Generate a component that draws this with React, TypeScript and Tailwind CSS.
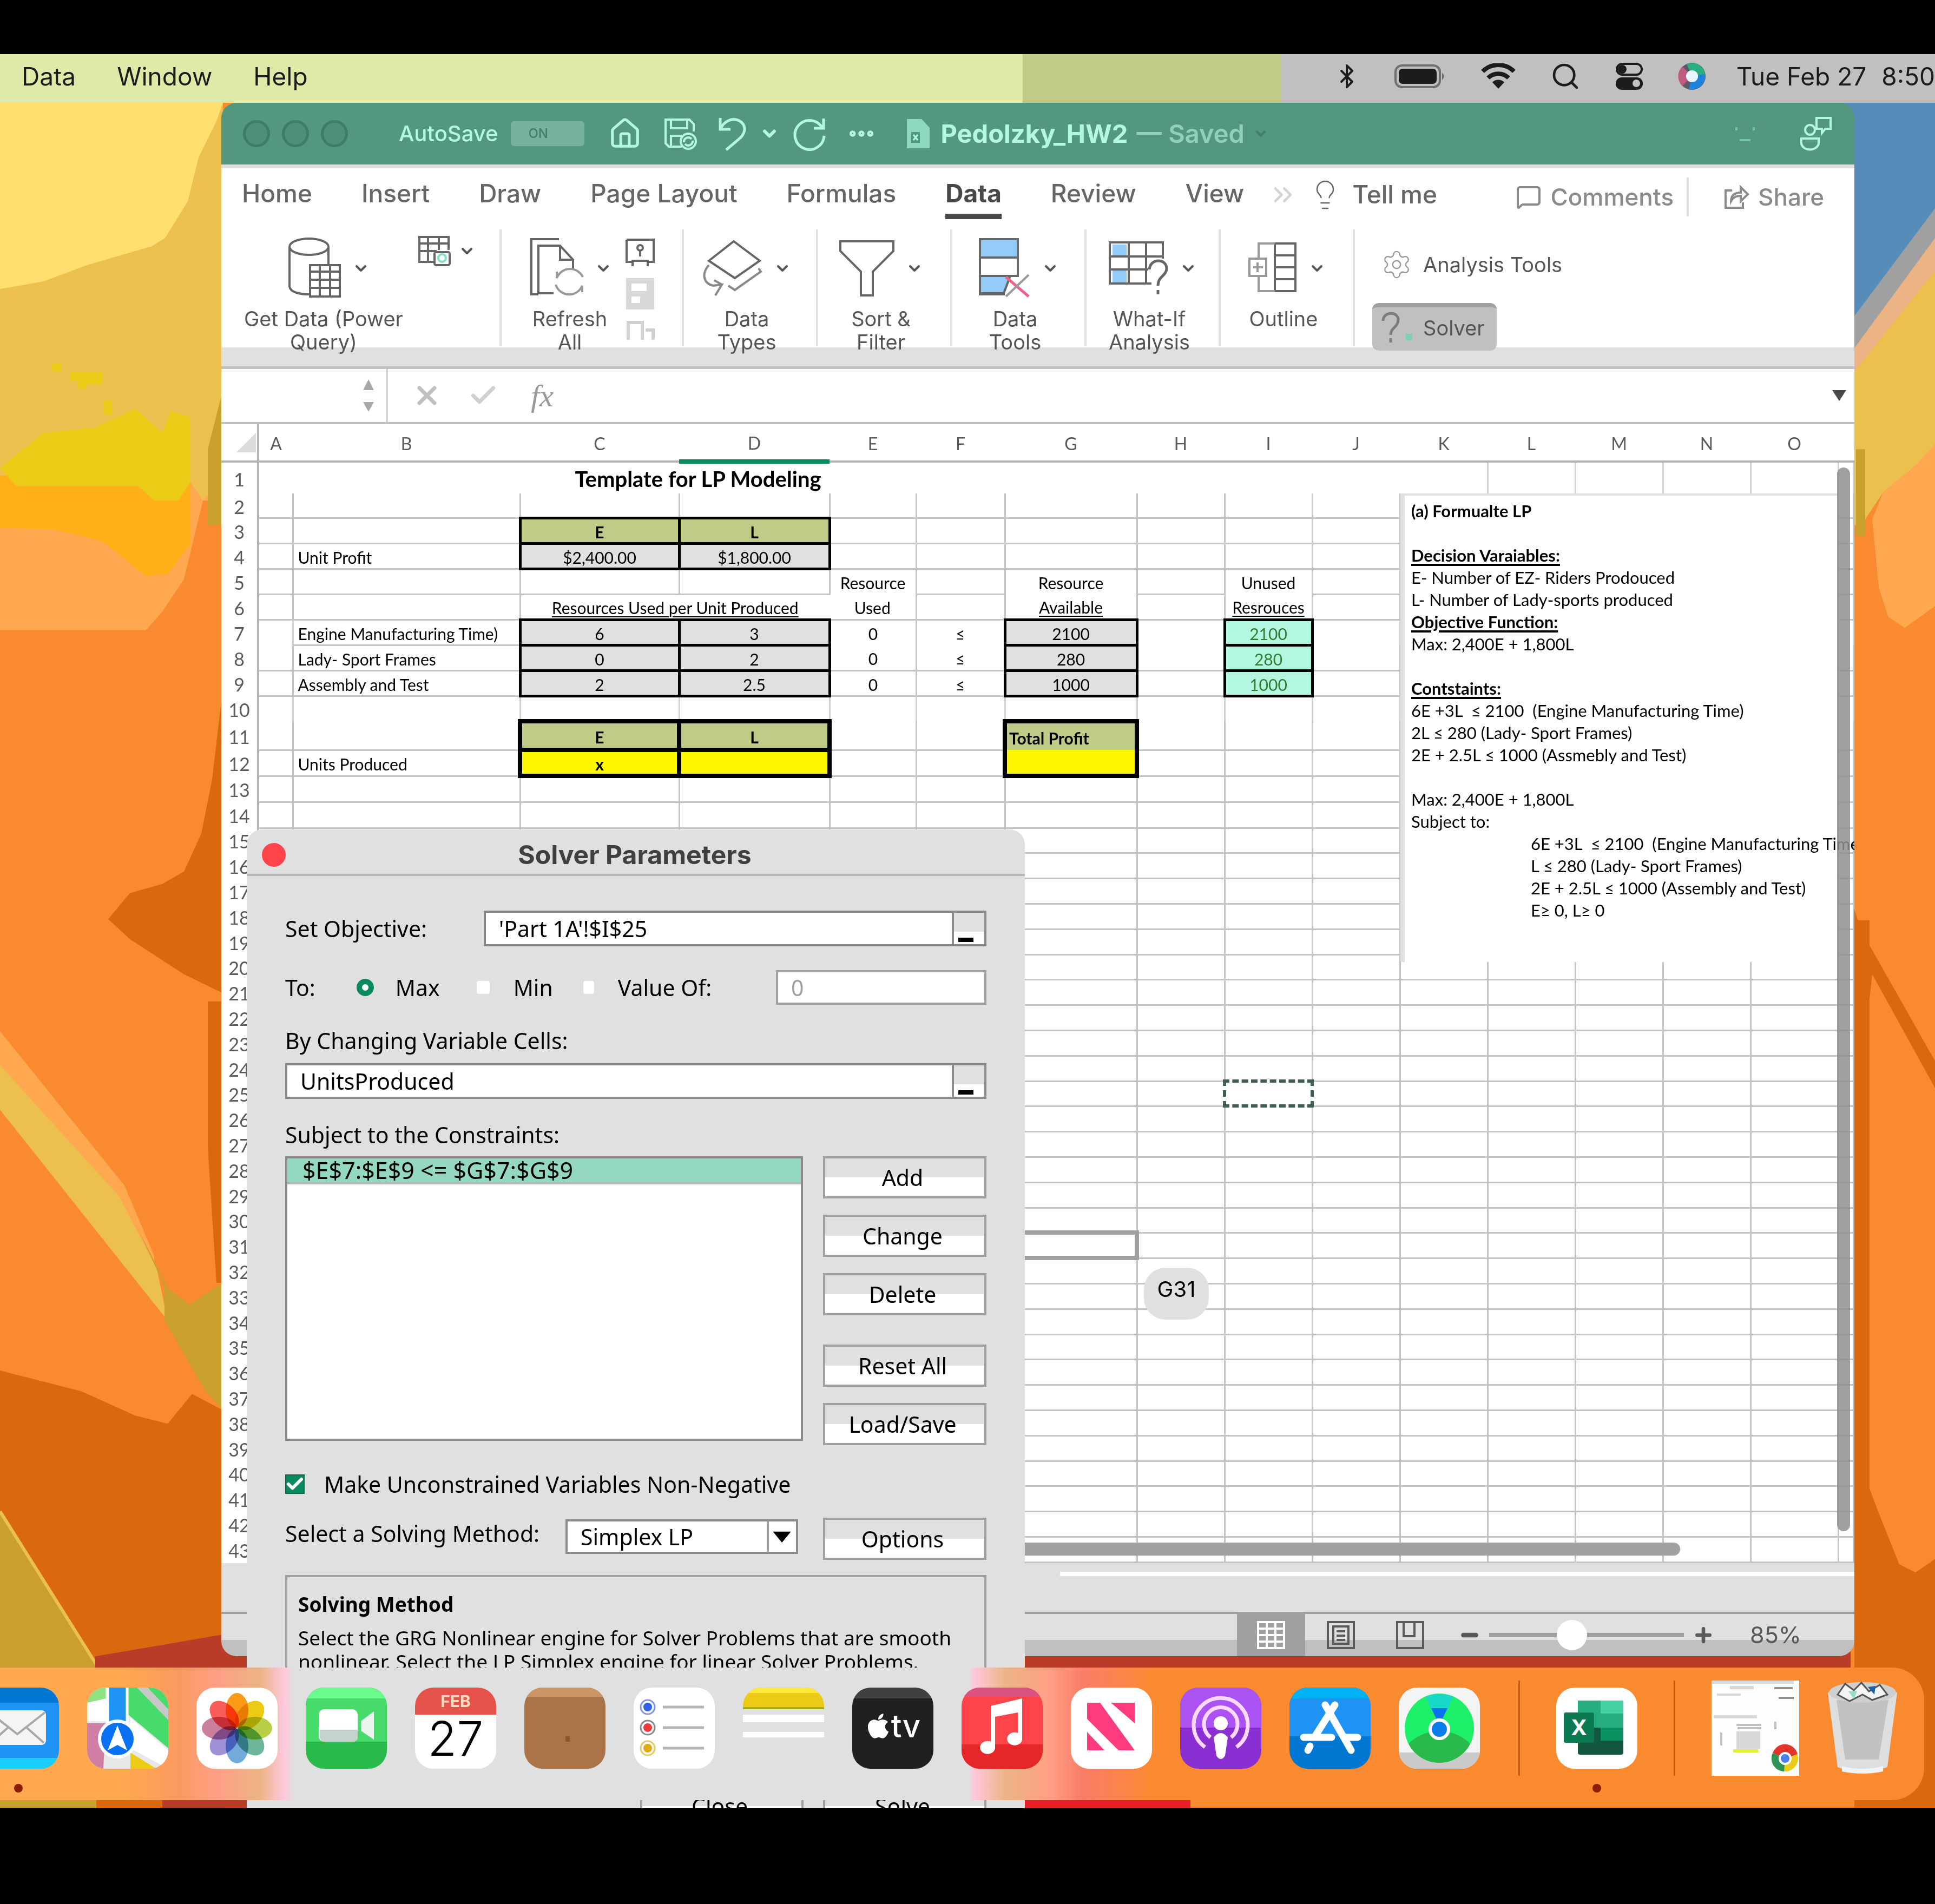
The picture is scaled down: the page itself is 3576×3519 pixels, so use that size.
import { useState } from 'react';
import type { ReactNode } from 'react';
import {
  Bluetooth,
  Check,
  ChevronDown,
  ChevronsRight,
  Ellipsis,
  House,
  Lightbulb,
  MessageSquare,
  Minus,
  Plus,
  Search,
  Settings,
  X,
} from 'lucide-react';
import { FaApple } from 'react-icons/fa';

interface Cell {
  text?: string;
  className: string;
}

const columns = ['A', 'B', 'C', 'D', 'E', 'F', 'G', 'H', 'I', 'J', 'K', 'L', 'M', 'N', 'O'];

const HEAD = 'border-[5px] border-black bg-[#c1cb88] font-bold text-center';
const INPUT = 'border-[5px] border-black bg-[#e0e0e0] text-center';
const BOXHEAD = 'border-8 border-black bg-[#c1cb88] font-bold text-center';
const BOXINPUT = 'border-8 border-black bg-[#fff700] text-center font-bold';
const LEFT = 'border-r-[3px] border-b-[3px] border-[#c4c4c4] text-left pl-2';
const CENTER = 'border-r-[3px] border-b-[3px] border-[#c4c4c4] text-center';
const OPEN = 'border-r-[3px] border-[#c4c4c4] text-center';
const UNDERLINED = 'border-r-[3px] border-[#c4c4c4] text-center underline decoration-2 underline-offset-4';
const MINT = 'border-[5px] border-black bg-[#b4f7e1] text-center text-[#2e7d32]';

const cells: Record<string, Cell> = {
  C3: { text: 'E', className: HEAD },
  D3: { text: 'L', className: HEAD },
  B4: { text: 'Unit Profit', className: LEFT },
  C4: { text: '$2,400.00', className: INPUT },
  D4: { text: '$1,800.00', className: INPUT },
  E5: { text: 'Resource', className: OPEN },
  G5: { text: 'Resource', className: OPEN },
  I5: { text: 'Unused', className: OPEN },
  E6: { text: 'Used', className: CENTER },
  G6: { text: 'Available', className: UNDERLINED },
  I6: { text: 'Resrouces', className: UNDERLINED },
  B7: { text: 'Engine Manufacturing Time)', className: LEFT },
  C7: { text: '6', className: INPUT },
  D7: { text: '3', className: INPUT },
  E7: { text: '0', className: OPEN },
  F7: { text: '≤', className: OPEN },
  G7: { text: '2100', className: INPUT },
  I7: { text: '2100', className: MINT },
  B8: { text: 'Lady- Sport Frames', className: LEFT },
  C8: { text: '0', className: INPUT },
  D8: { text: '2', className: INPUT },
  E8: { text: '0', className: CENTER },
  F8: { text: '≤', className: CENTER },
  G8: { text: '280', className: INPUT },
  I8: { text: '280', className: MINT },
  B9: { text: 'Assembly and Test', className: LEFT },
  C9: { text: '2', className: INPUT },
  D9: { text: '2.5', className: INPUT },
  E9: { text: '0', className: CENTER },
  F9: { text: '≤', className: CENTER },
  G9: { text: '1000', className: INPUT },
  I9: { text: '1000', className: MINT },
  C11: { text: 'E', className: BOXHEAD },
  D11: { text: 'L', className: BOXHEAD },
  G11: { text: 'Total Profit', className: 'border-x-8 border-t-8 border-black bg-[#c1cb88] font-bold text-left pl-1' },
  B12: { text: 'Units Produced', className: LEFT },
  C12: { text: 'x', className: BOXINPUT },
  D12: { className: BOXINPUT },
  G12: { className: 'border-x-8 border-b-8 border-black bg-[#fff700]' },
  I25: { className: 'border-[6px] border-dashed border-[#3f5f55]' },
  G31: { className: 'border-8 border-[#a0a0a0]' },
};

const rowHeight = (row: number) => {
  if (row === 1) return 'h-[59px]';
  if (row === 2) return 'h-[45px]';
  if (row === 11) return 'h-[53px]';
  if (row > 11 && row < 15) return 'h-12';
  return row > 14 && row % 5 === 0 ? 'h-[46px]' : 'h-[47px]';
};

const heading = 'font-bold underline decoration-4 underline-offset-4';

const notes = [
  { text: '(a) Formualte LP', className: 'font-bold' },
  { text: ' ', className: '' },
  { text: 'Decision Varaiables:', className: heading },
  { text: 'E- Number of EZ- Riders Prodouced', className: '' },
  { text: 'L- Number of Lady-sports produced', className: '' },
  { text: 'Objective Function:', className: heading },
  { text: 'Max: 2,400E + 1,800L', className: '' },
  { text: ' ', className: '' },
  { text: 'Contstaints:', className: heading },
  { text: '6E +3L  ≤ 2100  (Engine Manufacturing Time)', className: '' },
  { text: '2L ≤ 280 (Lady- Sport Frames)', className: '' },
  { text: '2E + 2.5L ≤ 1000 (Assmebly and Test)', className: '' },
  { text: ' ', className: '' },
  { text: 'Max: 2,400E + 1,800L', className: '' },
  { text: 'Subject to:', className: '' },
  { text: '6E +3L  ≤ 2100  (Engine Manufacturing Time', className: 'pl-[221px]' },
  { text: 'L ≤ 280 (Lady- Sport Frames)', className: 'pl-[221px]' },
  { text: '2E + 2.5L ≤ 1000 (Assembly and Test)', className: 'pl-[221px]' },
  { text: 'E≥ 0, L≥ 0', className: 'pl-[221px]' },
];

function MenuBar() {
  return (
    <header className="flex h-[90px] items-center justify-between bg-[linear-gradient(90deg,#e0eaa8_0,#e0eaa8_1890px,#c1cb88_1890px,#c1cb88_2367px,#c0c0c0_2367px)] pb-2 text-[46px] text-[#1c1c1c]">
      <nav className="flex gap-[76px] pl-10">
        <a href="#data">Data</a>
        <a href="#window">Window</a>
        <a href="#help">Help</a>
      </nav>
      <div className="flex items-center whitespace-nowrap">
        <Bluetooth className="mr-16 h-14 w-12" strokeWidth={2} />
        <svg className="mr-16 h-11 w-24" viewBox="0 0 96 44">
          <rect x="2" y="2" width="82" height="40" rx="12" fill="none" stroke="#6f6f6f" strokeWidth="4" />
          <rect x="8" y="8" width="70" height="28" rx="7" fill="#1c1c1c" />
          <path d="M88 15 q7 7 0 14z" fill="#6f6f6f" />
        </svg>
        <svg className="mr-16 h-12 w-16" viewBox="0 0 64 48">
          <path d="M3 15 A41 41 0 0 1 61 15" fill="none" stroke="#1c1c1c" strokeWidth="8" />
          <path d="M13 27 A27 27 0 0 1 51 27" fill="none" stroke="#1c1c1c" strokeWidth="8" />
          <path d="M21 35 A16 16 0 0 1 43 35 L32 47z" fill="#1c1c1c" />
        </svg>
        <Search className="mr-16 h-14 w-14" strokeWidth={2} />
        <svg className="mr-16 h-13 w-13" viewBox="0 0 52 52">
          <rect x="3" y="3" width="46" height="20" rx="10" fill="none" stroke="#1c1c1c" strokeWidth="4" />
          <circle cx="13" cy="13" r="8" fill="#1c1c1c" />
          <rect x="1" y="28" width="50" height="23" rx="11" fill="#1c1c1c" />
          <circle cx="39" cy="39" r="7" fill="#c0c0c0" />
        </svg>
        <svg className="mr-14 h-13 w-13" viewBox="0 0 52 52">
          <circle cx="26" cy="26" r="25" fill="#5a5a68" />
          <path d="M26 26 L8 8 A25 25 0 0 0 8 44z" fill="#c05a80" />
          <path d="M26 26 L16 3 A25 25 0 0 1 50 22z" fill="#29b07f" />
          <path d="M26 26 L50 22 A25 25 0 0 1 20 50z" fill="#1f83dd" />
          <circle cx="26" cy="26" r="11" fill="#e8f4ff" />
        </svg>
        <time className="mr-7">Tue Feb 27</time>
        <time>8:50</time>
      </div>
    </header>
  );
}

function Wallpaper() {
  return (
    <svg className="absolute inset-0 h-full w-full" viewBox="0 190 3576 3150" preserveAspectRatio="none" aria-hidden="true">
      <rect y="190" width="3576" height="3150" fill="#fa8a30" />
      <path d="M0 190H412V925L375 925 340 1070 300 1130 270 1164H0z" fill="#ffa84f" />
      <path d="M0 190H412V880L375 925 352 890 0 878z" fill="#ecc04e" />
      <path d="M0 190H412L400 224 367 291 347 372 305 440 280 455 160 490 80 520 0 534z" fill="#ffdf6f" />
      <path d="M0 880H352V1005L310 1060 270 1065 190 1000 100 978 0 975z" fill="#ffb017" />
      <path d="M0 865L80 800 175 790 250 755 300 800 315 760 352 770V890L330 925H285L255 898H30z" fill="#eccb17" />
      <path d="M95 672h18v14H95zM130 688h60v22h-30v8h-16v-14h-14zM192 740h16v26h-16z" fill="#eccb17" />
      <path d="M384 830L412 720V970H384z" fill="#c9a02d" />
      <path d="M200 1698L240 1650 300 1633 340 1610 372 1540 392 1440 412 1270V1835L340 1800 240 1735z" fill="#d9680f" />
      <path d="M384 1850H412V2370H400L384 2120z" fill="#d9680f" />
      <path d="M0 1905L230 2190 285 2320V2370L0 1980z" fill="#ffa84f" />
      <path d="M0 1968L220 2210 290 2345 310 2440 0 2050z" fill="#ecc04e" />
      <path d="M250 2260L310 2380 350 2410 412 2370V2605L380 2570 304 2440V2376z" fill="#c9a02d" />
      <path d="M0 2532L150 2570 250 2615 310 2630 355 2575 412 2605V3340H0z" fill="#d9680f" />
      <path d="M0 2792L178 3075V3340H0z" fill="#c9a02d" />
      <path d="M0 2792L178 3075" stroke="#ecc04e" strokeWidth="6" />
      <path d="M176 3060L410 3020 456 3050V3340H300V3100H176z" fill="#b83c28" />

      <path d="M3400 190H3576V390L3400 640z" fill="#558cba" />
      <path d="M3576 385V450L3400 700V620z" fill="#a0a0a0" />
      <path d="M3576 440V510L3400 780V680z" fill="#ecb384" />
      <path d="M3576 500V830L3480 910 3440 970H3400V720z" fill="#ecc04e" />
      <path d="M3430 830H3447V990H3430z" fill="#c9a02d" />
      <path d="M3576 820L3540 860 3480 910 3460 960 3472 1085 3490 1140 3520 1160 3576 1120z" fill="#ffa84f" />
      <path d="M3427 1680L3440 1720 3576 1960V2010L3460 1800 3427 2100z" fill="#d9680f" />
      <path d="M3427 1700H3455V2750L3470 2790 3510 2890 3540 2905 3576 2880V3340H3427z" fill="#d9680f" />
      <path d="M1880 3050H3420V3100H1880z" fill="#b83c28" />
      <path d="M880 3320H2200V3340H880z" fill="#e62028" />
    </svg>
  );
}

function TitleBar() {
  return (
    <div className="flex h-[114px] items-center bg-[#54977f] px-10 text-[40px] font-medium text-[#b4f7e1]">
      <div className="flex gap-[22px]">
        {['Close', 'Minimize', 'Zoom'].map(name => (
          <button key={name} aria-label={name} className="h-[50px] w-[50px] rounded-full border-[5px] border-[#3b7d68] bg-[#4d8f78]" />
        ))}
      </div>
      <span className="ml-[94px]">AutoSave</span>
      <button aria-label="AutoSave switch" className="ml-6 flex h-[46px] w-[136px] items-center rounded-md bg-[#76b39f] pl-8 text-2xl text-[#3f806c]">
        ON
      </button>
      <div className="ml-11 flex items-center">
        <House className="h-[62px] w-[62px]" strokeWidth={2} />
        <svg className="ml-10 h-[64px] w-[64px]" viewBox="0 0 64 64" fill="none" stroke="#b4f7e1" strokeWidth="4">
          <path d="M34 56H10L4 50V6H48L56 14V28" />
          <path d="M14 6V22H44V6M14 56V36H34" />
          <circle cx="46" cy="46" r="14" />
          <path d="M38 48a8 8 0 0 1 14-6M54 45a8 8 0 0 1-14 6" />
        </svg>
        <svg className="ml-9 h-[64px] w-[54px]" viewBox="0 0 54 64" fill="none" stroke="#b4f7e1" strokeWidth="5">
          <path d="M5 3V24H24M5 24C12 8 28 2 40 8c14 8 12 22 2 32L16 62" />
        </svg>
        <ChevronDown className="ml-6 h-9 w-9" strokeWidth={4} />
        <svg className="ml-6 h-[64px] w-[64px]" viewBox="0 0 64 64" fill="none" stroke="#b4f7e1" strokeWidth="5">
          <path d="M58 4V22H40M56 22A27 27 0 1 0 59 36" />
        </svg>
        <Ellipsis className="ml-9 h-14 w-14" strokeWidth={3} />
      </div>
      <div className="ml-14 flex items-center whitespace-nowrap text-[47px]">
        <svg className="mr-5 h-[54px] w-[42px]" viewBox="0 0 42 54">
          <path d="M0 0H27L42 16V54H0z" fill="#8fd8c0" />
          <path d="M8 24H24V44H8z" fill="#54977f" />
          <path d="M12 29l8 10M20 29l-8 10" stroke="#b4f7e1" strokeWidth="3" />
        </svg>
        <h1 className="font-bold">Pedolzky_HW2</h1>
        <span className="ml-4 font-semibold text-[#8fd0bc]">— Saved</span>
        <ChevronDown className="ml-4 h-7 w-7 text-[#3f806c]" strokeWidth={4} />
      </div>
      <div className="ml-auto flex items-center gap-20">
        <svg className="h-10 w-10" viewBox="0 0 40 40" fill="none" stroke="#76c4a8" strokeWidth="4">
          <path d="M4 8V14M36 8V14M10 32H30" />
        </svg>
        <svg className="h-[66px] w-[62px]" viewBox="0 0 62 66" fill="none" stroke="#b4f7e1" strokeWidth="4">
          <path d="M32 4H58V24H48L42 32V24H32z" />
          <circle cx="20" cy="26" r="9" />
          <path d="M4 42H36V52C32 66 8 66 4 52z" />
        </svg>
      </div>
    </div>
  );
}

function RibbonTabs() {
  const tabs = ['Home', 'Insert', 'Draw', 'Page Layout', 'Formulas', 'Data', 'Review', 'View'];
  const [active, setActive] = useState('Data');

  return (
    <div className="flex h-[105px] items-center bg-white pr-14 pb-2 pl-[38px] text-[46px] text-[#666] font-medium">
      <div className="flex gap-[91px] whitespace-nowrap">
        {tabs.map(tab => (
          <button
            key={tab}
            onClick={() => setActive(tab)}
            className={`border-b-[10px] pt-1 leading-[76px] ${
              tab === active ? 'border-[#484848] font-bold text-[#484848]' : 'border-transparent'
            }`}
          >
            {tab}
          </button>
        ))}
      </div>
      <ChevronsRight className="ml-11 h-14 w-14 text-[#d4d4d4]" strokeWidth={2} />
      <Lightbulb className="ml-5 h-15 w-15" strokeWidth={1} />
      <span className="ml-5 whitespace-nowrap">Tell me</span>
      <div className="ml-auto flex items-center pt-2 text-[44px] text-[#8a8a8a]">
        <button className="flex items-center gap-4">
          <MessageSquare className="h-12 w-12" strokeWidth={2} />
          Comments
        </button>
        <div className="mx-6 h-[72px] w-1 bg-[#e0e0e0]" />
        <button className="ml-10 flex items-center gap-4">
          <svg className="h-12 w-12" viewBox="0 0 48 48" fill="none" stroke="#8a8a8a" strokeWidth="4">
            <path d="M16 12H4V44H36V34M14 32C14 20 22 16 32 16V6L45 19 32 32V22C22 22 18 25 14 32z" />
          </svg>
          Share
        </button>
      </div>
    </div>
  );
}

function Tool({ icon, lines }: { icon: ReactNode; lines: string[] }) {
  return (
    <button className="flex flex-col items-center">
      <span className="flex h-[144px] items-center">
        {icon}
        <ChevronDown className="ml-5 h-8 w-8" strokeWidth={3} />
      </span>
      {lines.map(line => (
        <span key={line} className="whitespace-nowrap">{line}</span>
      ))}
    </button>
  );
}

function Divider() {
  return <div className="h-[216px] w-1 shrink-0 bg-[#e0e0e0]" />;
}

function Ribbon() {
  const stroke = { fill: 'none', stroke: '#666', strokeWidth: 4 };

  return (
    <div className="h-[266px] border-b-[5px] border-[#c0c0c0] bg-[linear-gradient(#fff_0,#fff_226px,#e0e0e0_226px)] pt-2 text-[38px] leading-[43px] text-[#555]">
      <div className="flex items-start">
        <div className="flex h-[232px] w-[514px] pl-[42px]">
          <Tool
            lines={['Get Data (Power', 'Query)']}
            icon={
              <svg className="ml-5 h-[116px] w-[98px]" viewBox="0 0 98 116" {...stroke}>
                <ellipse cx="38" cy="18" rx="36" ry="15" />
                <path d="M2 18V92C4 102 20 106 38 106M74 18V50" />
                <path d="M40 52H95V110H40zM40 64H95M40 79H95M40 94H95M58 52V110M77 52V110" fill="#fff" />
              </svg>
            }
          />
          <button aria-label="Data from picture" className="mt-2 ml-7 flex h-16 items-center gap-3">
            <svg className="h-[60px] w-[62px]" viewBox="0 0 62 60" {...stroke}>
              <path d="M28 50H2V4H56V28M2 16H56M2 30H34M18 4V50M38 4V28" />
              <rect x="30" y="32" width="28" height="24" rx="3" />
              <circle cx="44" cy="43" r="7" stroke="#7fe0cc" />
            </svg>
            <ChevronDown className="h-8 w-8" strokeWidth={3} />
          </button>
        </div>
        <Divider />
        <div className="flex w-[333px] gap-6 pl-12">
          <Tool
            lines={['Refresh', 'All']}
            icon={
              <svg className="ml-1 h-[116px] w-[100px]" viewBox="0 0 100 116" {...stroke}>
                <path d="M16 106H3V4H54M44 104H16V16H56L80 42V58M56 16V42H80" />
                <path d="M98 74A26 26 0 0 0 50 76V64M48 88A26 26 0 0 0 97 90V102" stroke="#999" />
              </svg>
            }
          />
          <div className="mt-4 flex flex-col gap-4 text-[#a0a0a0]">
            <svg className="h-14 w-14" viewBox="0 0 56 56" {...stroke}>
              <path d="M3 3H53V44H40M3 3V44H14M28 22V34M14 52V42H42V52" />
              <circle cx="28" cy="18" r="5" />
            </svg>
            <svg className="h-[62px] w-14" viewBox="0 0 56 62">
              <path d="M2 2H54V60H2z" fill="#d8d8d8" />
              <path d="M12 12H40V26H12zM12 36H28V48H12z" fill="#fff" />
            </svg>
            <svg className="h-10 w-14" viewBox="0 0 56 40" fill="none" stroke="#d0d0d0" strokeWidth="6">
              <path d="M6 38V6H32V38M38 20H52V38" />
            </svg>
          </div>
        </div>
        <Divider />
        <div className="flex w-[244px] justify-center pr-3">
          <Tool
            lines={['Data', 'Types']}
            icon={
              <svg className="h-[112px] w-[112px]" viewBox="0 0 112 112" {...stroke}>
                <path d="M58 6L106 42 60 74 12 42z" />
                <path d="M104 56L108 62 60 96 48 88M12 50C-2 66 2 84 20 88L36 86 24 106M36 86L22 78" stroke="#888" />
              </svg>
            }
          />
        </div>
        <Divider />
        <div className="flex w-[244px] justify-center pr-3">
          <Tool
            lines={['Sort &', 'Filter']}
            icon={
              <svg className="h-[108px] w-[104px]" viewBox="0 0 104 108" {...stroke}>
                <path d="M3 4H101V22L63 60V104H41V60L3 22z" />
              </svg>
            }
          />
        </div>
        <Divider />
        <div className="flex w-[244px] justify-center pr-3">
          <Tool
            lines={['Data', 'Tools']}
            icon={
              <svg className="ml-3 h-[116px] w-[98px]" viewBox="0 0 98 116" {...stroke}>
                <path d="M4 4H74V38H4zM4 72H60L48 104H4z" fill="#94cbf8" />
                <path d="M4 4H74V74M4 4V106H50M4 38H74M4 72H74" />
                <path d="M52 74L94 110" stroke="#f2608a" strokeWidth="5" />
                <path d="M94 70L52 110" stroke="#999" />
              </svg>
            }
          />
        </div>
        <Divider />
        <div className="flex w-[244px] justify-center pr-3">
          <Tool
            lines={['What-If', 'Analysis']}
            icon={
              <svg className="ml-3 h-[104px] w-[112px]" viewBox="0 0 112 104" {...stroke}>
                <path d="M8 8H34V30H8zM8 56H34V78H8z" fill="#94cbf8" stroke="none" />
                <path d="M80 80H3V4H101V34M3 30H101M3 54H74M38 4V80M70 4V80" />
                <path d="M76 54C78 32 108 34 108 52C108 66 92 66 92 84M92 92V100" strokeWidth="5" />
              </svg>
            }
          />
        </div>
        <Divider />
        <div className="flex w-[244px] justify-center pr-3">
          <Tool
            lines={['Outline']}
            icon={
              <svg className="ml-3 h-[100px] w-[92px]" viewBox="0 0 92 100" {...stroke}>
                <path d="M50 4H88V92H50zM50 26H88M50 48H88M50 70H88" />
                <path d="M50 4H20V32M20 64V92H50M3 32H34V64H3zM10 48H28M18 39V57" stroke="#999" />
              </svg>
            }
          />
        </div>
        <Divider />
        <div className="flex flex-col items-start gap-[42px] pt-9 pl-8">
          <button className="flex items-center gap-5 pl-4">
            <Settings className="h-[58px] w-[58px] text-[#999]" strokeWidth={1} />
            Analysis Tools
          </button>
          <button className="flex h-[88px] w-[230px] items-center rounded-xl border-t-8 border-[#a0a0a0] bg-[#c0c0c0] pb-1 pl-4">
            <svg className="h-[62px] w-[62px]" viewBox="0 0 62 62" fill="none" stroke="#7c7c7c" strokeWidth="5">
              <path d="M4 18C4 0 32 0 32 16C32 30 18 30 18 44M18 50V58" />
              <path d="M46 42H58V54H46z" fill="#7fd0bb" stroke="none" />
            </svg>
            <span className="ml-4">Solver</span>
          </button>
        </div>
      </div>
    </div>
  );
}

function FormulaBar() {
  return (
    <div className="flex h-[102px] items-center border-b-4 border-[#c0c0c0] bg-white">
      <input aria-label="Name box" className="h-full w-[256px] px-4 text-4xl outline-none" />
      <svg className="mr-4 h-16 w-8" viewBox="0 0 32 64" fill="#a8a8a8">
        <path d="M16 2L26 22H6zM6 44H26L16 62z" />
      </svg>
      <div className="h-full w-1 bg-[#d4d4d4]" />
      <X className="ml-11 h-14 w-14 text-[#c0c0c0]" strokeWidth={3} />
      <Check className="ml-12 h-14 w-14 text-[#d0d0d0]" strokeWidth={3} />
      <label htmlFor="formula" className="ml-15 font-['Liberation_Serif',serif] text-[58px] text-[#999] italic">
        fx
      </label>
      <input id="formula" className="h-full min-w-0 flex-1 px-6 text-4xl outline-none" />
      <svg className="mr-3 h-6 w-8" viewBox="0 0 32 24">
        <path d="M3 2H29L16 22z" fill="#4a4a4a" />
      </svg>
    </div>
  );
}

function SheetRow({ row }: { row: number }) {
  const openRow = row === 1 || row === 7 || row === 10;
  const blank = openRow ? 'border-r-[3px] border-[#d0d0d0]' : 'border-r-[3px] border-b-[3px] border-[#c4c4c4]';

  return (
    <tr className={rowHeight(row)}>
      <th scope="row" className="border-r-4 border-[#b4b4b4] pt-1 text-[34px] font-normal text-[#5a5a5a]">{row}</th>
      {columns.map(column => {
        if (row === 1 && column <= 'J') {
          if (column === 'A') {
            return (
              <td key={column} colSpan={7} className="text-center text-[40px] font-bold">
                Template for LP Modeling
              </td>
            );
          }
          return column === 'H' ? <td key={column} colSpan={3} className="border-r-[3px] border-white" /> : null;
        }
        if (row === 6 && column === 'C') {
          return (
            <td key={column} colSpan={2} className="pt-1 text-center underline decoration-2 underline-offset-4">
              Resources Used per Unit Produced
            </td>
          );
        }
        if (row === 6 && column === 'D') return null;
        const cell = cells[column + row];
        return (
          <td key={column} className={`pt-1 ${cell ? cell.className : blank}`}>
            {cell?.text}
          </td>
        );
      })}
      <td className={blank} />
    </tr>
  );
}

function Sheet() {
  const rows = Array.from({ length: 43 }, (_, i) => i + 1);

  return (
    <div className="relative bg-white font-[Lato,'Open_Sans',sans-serif] text-black">
      <table className="w-full table-fixed border-collapse text-[30px] leading-9 whitespace-nowrap">
        <colgroup>
          <col className="w-[68px]" />
          <col className="w-[64px]" />
          <col className="w-[420px]" />
          <col className="w-[294px]" />
          <col className="w-[278px]" />
          <col className="w-[160px]" />
          <col className="w-[164px]" />
          <col className="w-[244px]" />
          <col className="w-[162px]" />
          <col className="w-[162px]" />
          <col className="w-[162px]" />
          <col className="w-[162px]" />
          <col className="w-[162px]" />
          <col className="w-[162px]" />
          <col className="w-[162px]" />
          <col className="w-[162px]" />
          <col />
        </colgroup>
        <thead>
          <tr className="h-[69px]">
            <th className="border-r-4 border-b-4 border-[#b4b4b4]">
              <svg className="ml-auto h-10 w-10" viewBox="0 0 40 40">
                <path d="M38 2V38H2z" fill="#dcdcdc" />
              </svg>
            </th>
            {columns.map(column => (
              <th
                key={column}
                scope="col"
                className={`pt-1 text-[32px] font-normal text-[#5a5a5a] ${
                  column === 'D' ? 'border-b-8 border-[#0b8a60]' : 'border-b-4 border-[#b4b4b4]'
                }`}
              >
                {column}
              </th>
            ))}
            <th className="border-b-4 border-[#b4b4b4]" />
          </tr>
        </thead>
        <tbody>
          {rows.map(row => (
            <SheetRow key={row} row={row} />
          ))}
        </tbody>
      </table>

      {/* Floating text box on top of the cells */}
      <div className="absolute top-[128px] right-[31px] h-[866px] w-[808px] border-t-4 border-l-8 border-[#e0e0e0] bg-white pt-2 pl-3 text-[31px] leading-[41px] whitespace-pre">
        {notes.map((note, i) => (
          <p key={i} className={note.className}>{note.text}</p>
        ))}
      </div>
      <div className="absolute top-[1559px] left-[1705px] flex h-24 w-[120px] items-center justify-center rounded-[40px] bg-[#e0e0e0] pb-4 font-[Inter,sans-serif] text-[40px]">
        G31
      </div>
      <div className="absolute top-20 right-2 h-[1966px] w-6 rounded-full bg-[#8f8f8f]/85" />
      <div className="absolute right-[322px] bottom-[14px] left-[1400px] h-6 rounded-full bg-[#a0a0a0]" />
    </div>
  );
}

function StatusBar() {
  return (
    <>
      <div className="h-[90px] bg-[#e0e0e0] pt-4">
        <div className="ml-[1550px] h-2 bg-white" />
      </div>
      <div className="flex h-[82px] items-center justify-end border-t-4 border-[#a0a0a0] bg-[linear-gradient(#e0e0e0_0,#e0e0e0_48px,#c0c0c0_48px)] pr-[98px] text-[43px] text-[#5a5a5a]">
        <button aria-label="Normal view" className="flex h-full w-[126px] items-center justify-center bg-[#a0a0a0]">
          <svg className="h-[52px] w-[52px]" viewBox="0 0 52 52" fill="none" stroke="#fff" strokeWidth="4">
            <path d="M2 2H50V50H2zM2 14H50M2 26H50M2 38H50M18 2V50M34 2V50" />
          </svg>
        </button>
        <button aria-label="Page layout view" className="ml-10">
          <svg className="h-[52px] w-[52px]" viewBox="0 0 52 52" fill="none" stroke="#5a5a5a" strokeWidth="4">
            <path d="M2 2H50V50H2zM12 10H40V42H12zM18 19H34M18 27H34M18 35H34" />
          </svg>
        </button>
        <button aria-label="Page break view" className="ml-[76px]">
          <svg className="h-[52px] w-[52px]" viewBox="0 0 52 52" fill="none" stroke="#5a5a5a" strokeWidth="4">
            <path d="M2 2H50V50H2zM14 2V28H34V2M34 2V20" />
          </svg>
        </button>
        <Minus className="ml-16 h-10 w-10" strokeWidth={5} />
        <input
          type="range"
          aria-label="Zoom"
          defaultValue={41}
          className="mx-4 h-[18px] w-[360px] appearance-none bg-[linear-gradient(transparent_5px,#a0a0a0_5px,#a0a0a0_13px,transparent_13px)] [&::-webkit-slider-thumb]:h-14 [&::-webkit-slider-thumb]:w-14 [&::-webkit-slider-thumb]:appearance-none [&::-webkit-slider-thumb]:rounded-full [&::-webkit-slider-thumb]:bg-white"
        />
        <Plus className="h-10 w-10" strokeWidth={4} />
        <span className="ml-[66px]">85%</span>
      </div>
    </>
  );
}

function DialogButton({ children }: { children: ReactNode }) {
  return (
    <button className="h-[78px] w-[302px] shrink-0 border-4 border-[#a0a0a0] bg-[linear-gradient(#e0e0e0_50%,#fff_50%)] pr-2">
      {children}
    </button>
  );
}

function RangePicker() {
  return (
    <button aria-label="Pick range" className="flex h-full w-[60px] items-end border-l-4 border-[#8a8a8a] bg-[linear-gradient(#e0e0e0_60%,#fff_60%)] pb-1 pl-2">
      <span className="h-2 w-7 bg-black" />
    </button>
  );
}

function SolverDialog() {
  const [goal, setGoal] = useState('Max');

  return (
    <section
      role="dialog"
      aria-label="Solver Parameters"
      className="absolute top-[1343px] left-[456px] h-[1900px] w-[1438px] rounded-t-[28px] bg-[#e0e0e0] font-['Noto_Sans','Open_Sans',sans-serif] text-[41px] leading-[44px] text-black"
    >
      <div className="flex h-[86px] items-center border-b-4 border-[#b4b4b4] pt-3 pl-7 font-[Inter,sans-serif]">
        <button aria-label="Close dialog" className="h-11 w-11 rounded-full bg-[#ff4549]" />
        <h2 className="flex-1 pr-[76px] text-center text-[48px] font-bold text-[#3f3f3f]">Solver Parameters</h2>
      </div>
      <div className="px-[71px] pt-16">
        <div className="flex items-center justify-between">
          <label htmlFor="objective">Set Objective:</label>
          <div className="flex h-[66px] w-[929px] items-center border-4 border-[#8a8a8a] bg-white">
            <input id="objective" defaultValue="'Part 1A'!$I$25" className="min-w-0 flex-1 pl-6 outline-none" />
            <RangePicker />
          </div>
        </div>
        <div className="mt-11 flex items-center">
          <span>To:</span>
          <label className="ml-19 flex items-center gap-10">
            <input type="radio" name="goal" checked={goal === 'Max'} onChange={() => setGoal('Max')} className="h-8 w-8 appearance-none rounded-full bg-white checked:border-[10px] checked:border-[#0b8a60]" />
            Max
          </label>
          <label className="ml-17 flex items-center gap-11">
            <input type="radio" name="goal" checked={goal === 'Min'} onChange={() => setGoal('Min')} className="h-6 w-6 appearance-none rounded-sm bg-white" />
            Min
          </label>
          <label className="ml-14 flex items-center gap-11">
            <input type="radio" name="goal" checked={goal === 'Value'} onChange={() => setGoal('Value')} className="h-6 w-5 appearance-none rounded-sm bg-white" />
            Value Of:
          </label>
          <input aria-label="Target value" defaultValue="0" className="ml-auto h-[64px] w-[389px] border-4 border-[#a0a0a0] bg-white pl-6 text-[#a0a0a0] outline-none" />
        </div>
        <label htmlFor="variables" className="mt-11 block">By Changing Variable Cells:</label>
        <div className="mt-5 flex h-[66px] items-center border-4 border-[#8a8a8a] bg-white">
          <input id="variables" defaultValue="UnitsProduced" className="min-w-0 flex-1 pl-6 outline-none" />
          <RangePicker />
        </div>
        <p className="mt-11">Subject to the Constraints:</p>
        <div className="mt-[18px] flex items-start justify-between">
          <ul className="h-[526px] w-[957px] border-4 border-[#8a8a8a] bg-white">
            <li className="h-12 border-b-4 border-[#b4b4b4] bg-[#94d8c0] pl-7 text-[43px]">$E$7:$E$9 &lt;= $G$7:$G$9</li>
          </ul>
          <div className="flex flex-col gap-[30px]">
            <DialogButton>Add</DialogButton>
            <DialogButton>Change</DialogButton>
            <DialogButton>Delete</DialogButton>
            <div className="mt-6 flex flex-col gap-[30px]">
              <DialogButton>Reset All</DialogButton>
              <DialogButton>Load/Save</DialogButton>
            </div>
          </div>
        </div>
        <label className="mt-[50px] flex items-center gap-9">
          <span className="relative flex">
            <input type="checkbox" defaultChecked className="h-9 w-9 appearance-none border-2 border-[#0a6b4b] bg-[#0b8a60]" />
            <Check className="pointer-events-none absolute inset-0 h-9 w-9 text-white" strokeWidth={4} />
          </span>
          Make Unconstrained Variables Non-Negative
        </label>
        <div className="mt-10 flex items-center">
          <label htmlFor="method" className="pb-5">Select a Solving Method:</label>
          <div className="relative ml-auto pb-2">
            <select id="method" className="h-[64px] w-[430px] appearance-none border-4 border-[#8a8a8a] bg-white pl-6 leading-[56px] outline-none">
              <option>Simplex LP</option>
            </select>
            <svg className="pointer-events-none absolute top-1 right-1 h-14 w-[54px] border-l-4 border-[#a0a0a0]" viewBox="0 0 54 56">
              <path d="M8 18H44L26 40z" />
            </svg>
          </div>
          <div className="ml-[46px]">
            <DialogButton>Options</DialogButton>
          </div>
        </div>
        <div className="mt-7 h-[400px] border-4 border-[#a0a0a0] px-5 pt-7 text-[37px]">
          <h3 className="font-bold">Solving Method</h3>
          <p className="mt-[18px]">
            Select the GRG Nonlinear engine for Solver Problems that are smooth nonlinear. Select the LP Simplex engine for linear Solver Problems.
          </p>
        </div>
        <div className="-mt-3 flex justify-end gap-9">
          <DialogButton>Close</DialogButton>
          <DialogButton>Solve</DialogButton>
        </div>
      </div>
    </section>
  );
}

function DockItem({ name, running, children }: { name: string; running?: boolean; children: ReactNode }) {
  return (
    <button aria-label={name} className="relative h-[150px] w-[150px] shrink-0">
      {children}
      {running && <span className="absolute -bottom-11 left-[67px] h-4 w-4 rounded-full bg-[#8f1d06]" />}
    </button>
  );
}

const tile = 'h-full w-full overflow-hidden rounded-[34px]';

function Dock() {
  const petals = ['#fa9a17', '#eccb17', '#b9cf45', '#6fb79b', '#74a9dc', '#a191d8', '#c9809f', '#fb5e5a'];

  return (
    <nav className="relative mr-[20px] flex h-[245px] items-center gap-[51px] rounded-r-[60px] bg-[linear-gradient(90deg,#ffa84f_0,#ffa84f_230px,#fa9a5f_330px,#ff9f85_400px,#ecb384_480px,#ffc8dc_525px,#e0e0e0_545px,#e0e0e0_1790px,#ffc8dc_1800px,#ecb384_1860px,#ff9f85_1940px,#fa7d69_2000px,#fa8a30_2130px)] pb-5">
      <div className="-ml-[41px] flex items-center gap-[52px]">
        <DockItem name="Mail" running>
          <svg className={tile} viewBox="0 0 150 150">
            <rect width="150" height="150" fill="#1f93f4" />
            <rect width="150" height="28" fill="#0277d2" />
            <rect y="130" width="150" height="20" fill="#1acfff" />
            <rect x="20" y="42" width="106" height="64" rx="8" fill="#f4f4f4" />
            <path d="M22 46L73 86 124 46M24 102L58 72M122 102L88 72" fill="none" stroke="#a8a8a8" strokeWidth="4" />
          </svg>
        </DockItem>
        <DockItem name="Maps">
          <svg className={tile} viewBox="0 0 150 150">
            <rect width="150" height="150" fill="#e8e8e8" />
            <path d="M0 0H34V30L0 60z" fill="#8fe281" />
            <path d="M76 0H150V112L76 50z" fill="#46db6a" />
            <path d="M92 0H112L150 40V60z" fill="#c8c8c8" />
            <path d="M0 66L34 66 30 150H0z" fill="#cf7fa6" />
            <path d="M0 62V28L36 20V62z" fill="#fff" />
            <path d="M80 56L150 116V150L76 110z" fill="#fff" />
            <path d="M80 120L128 150H80z" fill="#eccb17" />
            <rect x="38" y="-4" width="36" height="74" fill="#1f93f4" stroke="#fff" strokeWidth="5" />
            <circle cx="56" cy="95" r="33" fill="#0a72f2" stroke="#fff" strokeWidth="6" />
            <path d="M56 70L74 116 56 106 38 116z" fill="#fff" />
          </svg>
        </DockItem>
        <DockItem name="Photos">
          <svg className={tile} viewBox="0 0 150 150">
            <rect width="150" height="150" fill="#fff" />
            {petals.map((color, i) => (
              <ellipse key={color} className="mix-blend-multiply" cx="75" cy="42" rx="21" ry="32" fill={color} transform={`rotate(${i * 45} 75 75)`} />
            ))}
          </svg>
        </DockItem>
        <DockItem name="FaceTime">
          <svg className={tile} viewBox="0 0 150 150">
            <rect width="150" height="150" fill="#2aba4c" />
            <rect width="150" height="100" fill="#46db6a" />
            <rect width="150" height="20" fill="#69fb8b" />
            <rect x="24" y="40" width="72" height="60" rx="10" fill="#fff" />
            <path d="M26 78H96V94Q94 100 86 100H36Q26 100 26 90z" fill="#c4d4cc" />
            <path d="M102 62L126 44V96L102 80z" fill="#eaf5ee" />
          </svg>
        </DockItem>
        <DockItem name="Calendar">
          <div className={`${tile} flex flex-col bg-white`}>
            <span className="flex h-[50px] items-center justify-center bg-[#e5524c] text-[30px] font-bold text-[#ffd9c0]">FEB</span>
            <span className="text-center text-[88px] leading-[88px] font-light text-black">27</span>
          </div>
        </DockItem>
        <DockItem name="Contacts">
          <svg className={tile} viewBox="0 0 150 150">
            <rect width="150" height="150" fill="#ab7348" />
            <rect width="150" height="17" fill="#cb9566" />
            <path d="M76 90h8v10h-8z" fill="#8a5530" />
          </svg>
        </DockItem>
        <DockItem name="Reminders">
          <svg className={tile} viewBox="0 0 150 150">
            <rect width="150" height="150" fill="#fff" />
            <g fill="none" strokeWidth="3">
              <circle cx="26" cy="36" r="13" stroke="#8094ee" />
              <circle cx="26" cy="74" r="13" stroke="#8a8a8a" />
              <circle cx="26" cy="112" r="13" stroke="#e6c860" />
              <path d="M54 36H130M54 74H130M54 112H130" stroke="#b4b4b4" strokeWidth="5" />
            </g>
            <circle cx="26" cy="36" r="8" fill="#2f62e8" />
            <circle cx="26" cy="74" r="8" fill="#ee3a3a" />
            <circle cx="26" cy="112" r="8" fill="#e3a913" />
          </svg>
        </DockItem>
        <DockItem name="Notes">
          <svg className={tile} viewBox="0 0 150 150">
            <rect width="150" height="150" fill="#e0e0e0" />
            <rect width="150" height="40" fill="#eccb17" />
            <rect width="150" height="10" fill="#ffe83c" />
            <path d="M0 50H150V64H0zM0 82H150V92H0z" fill="#fff" />
            <rect y="36" width="150" height="4" fill="#9fae20" />
          </svg>
        </DockItem>
        <DockItem name="TV">
          <div className={`${tile} flex items-center justify-center bg-[linear-gradient(#404040_20px,#202020_20px)] pb-2 text-[58px] font-medium text-white`}>
            <FaApple className="h-13 w-12" />
            tv
          </div>
        </DockItem>
        <DockItem name="Music">
          <svg className={tile} viewBox="0 0 150 150">
            <rect width="150" height="150" fill="#ff4549" />
            <rect width="150" height="17" fill="#d95280" />
            <rect y="105" width="150" height="45" fill="#e6272a" />
            <path d="M54 34L112 20V96A14 12 0 1 1 104 84V46L62 54V112A14 12 0 1 1 54 100z" fill="#fff" />
          </svg>
        </DockItem>
        <DockItem name="News">
          <svg className={tile} viewBox="0 0 150 150">
            <rect width="150" height="150" fill="#fff" />
            <path d="M30 28H54L118 116H88L30 58zM74 28H118V66zM30 82L62 116H30z" fill="#ff3b7f" />
          </svg>
        </DockItem>
        <DockItem name="Podcasts">
          <svg className={tile} viewBox="0 0 150 150">
            <rect width="150" height="150" fill="#8a30d2" />
            <rect width="150" height="74" fill="#ab52f2" />
            <g fill="none" stroke="#ffd8ff" strokeWidth="7">
              <path d="M46 110A50 50 0 1 1 104 110" />
              <path d="M56 92A31 31 0 1 1 94 92" />
            </g>
            <circle cx="75" cy="66" r="13" fill="#fff" />
            <path d="M62 92Q75 76 88 92L83 126Q75 138 67 126z" fill="#fff" />
          </svg>
        </DockItem>
        <DockItem name="App Store">
          <svg className={tile} viewBox="0 0 150 150">
            <rect width="150" height="150" fill="#0277d2" />
            <rect width="150" height="90" fill="#1f93f4" />
            <rect width="150" height="20" fill="#00b2f4" />
            <path d="M66 32L114 116M84 32L46 92M38 108L34 116M26 92H78M100 92H126" stroke="#fff" strokeWidth="13" strokeLinecap="round" />
          </svg>
        </DockItem>
        <DockItem name="Find My">
          <svg className={tile} viewBox="0 0 150 150">
            <rect width="150" height="150" fill="#f4f4f4" />
            <rect y="120" width="150" height="30" fill="#cacaca" />
            <circle cx="75" cy="75" r="64" fill="#1bf068" />
            <path d="M18 104A64 64 0 0 0 132 104A80 80 0 0 0 18 104z" fill="#2aba4c" />
            <path d="M60 42L50 17A64 64 0 0 1 100 17L90 42z" fill="#19d8c8" />
            <path d="M75 70L60 38H90z" fill="#0a72f2" />
            <circle cx="75" cy="77" r="17" fill="#0a7de8" stroke="#fff" strokeWidth="6" />
          </svg>
        </DockItem>
      </div>
      <div className="mr-4 ml-5 h-[176px] w-[3px] bg-[#c65a10]" />
      <DockItem name="Excel" running>
        <svg className={tile} viewBox="0 0 150 150">
          <rect width="150" height="150" fill="#fff" />
          <rect x="40" y="24" width="84" height="100" rx="4" fill="#13573f" />
          <path d="M40 24H124V74H40z" fill="#27ae80" />
          <path d="M82 24H124V48H82z" fill="#44d0a0" />
          <path d="M82 74H124V98H82z" fill="#0b9060" />
          <rect x="14" y="46" width="56" height="56" rx="4" fill="#0b7a50" />
          <text x="42" y="88" textAnchor="middle" fontSize="40" fontWeight="700" fill="#fff">X</text>
        </svg>
      </DockItem>
      <div className="mx-4 h-[176px] w-[3px] bg-[#c65a10]" />
      <button aria-label="Minimized window" className="h-[176px] w-[162px] shrink-0">
        <svg className="h-full w-full" viewBox="0 0 162 176">
          <rect width="162" height="176" fill="#fdfdfd" />
          <path d="M0 0H152V6H0zM10 24H54V28H10zM4 64H84V70H4zM46 94H90V126H46zM34 10H78V16H34z" fill="#d8d8d8" />
          <path d="M48 88H92M46 82H92M18 96V120M118 76V90" stroke="#c0c0c0" strokeWidth="4" />
          <path d="M124 32H152M116 14H150" stroke="#909090" strokeWidth="4" />
          <rect x="40" y="127" width="46" height="6" fill="#e8ee30" />
          <circle cx="136" cy="144" r="24" fill="#eccb17" />
          <path d="M136 144L113 134A24 24 0 0 1 159 136z" fill="#e0342c" />
          <path d="M136 144L113 134A24 24 0 0 0 134 168z" fill="#2d9455" />
          <circle cx="136" cy="144" r="10" fill="#4a7df0" stroke="#fff" strokeWidth="4" />
        </svg>
      </button>
      <button aria-label="Trash" className="h-[176px] w-[132px] shrink-0">
        <svg className="h-full w-full" viewBox="0 0 132 176">
          <path d="M2 22L20 160Q66 178 112 160L130 22z" fill="#dedede" />
          <path d="M18 36L34 146H96L114 36z" fill="#c2c2c2" />
          <ellipse cx="66" cy="22" rx="62" ry="19" fill="#cfcfcf" />
          <path d="M20 26L34 6 50 18 64 4 78 20 98 8 112 26 84 36 66 26 42 38z" fill="#f4f4f4" stroke="#555" strokeWidth="3" />
          <path d="M76 12L90 10 88 26z" fill="#1f5fa8" />
          <path d="M40 20L56 20 50 34z" fill="#8fe0c8" />
          <path d="M28 158Q66 168 104 158V168Q66 176 28 168z" fill="#eef4f8" />
        </svg>
      </button>
    </nav>
  );
}

export default function App() {
  return (
    <div className="min-h-screen overflow-hidden bg-black pt-[100px] font-[Inter,sans-serif]">
      <MenuBar />
      <main className="relative overflow-hidden pb-[15px]">
        <Wallpaper />
        <div className="relative mr-[149px] mb-[21px] ml-[409px] overflow-hidden rounded-[28px]">
          <TitleBar />
          <div className="h-[7px] bg-[#e0e0e0]" />
          <RibbonTabs />
          <Ribbon />
          <FormulaBar />
          <Sheet />
          <StatusBar />
        </div>
        <SolverDialog />
        <Dock />
      </main>
    </div>
  );
}
